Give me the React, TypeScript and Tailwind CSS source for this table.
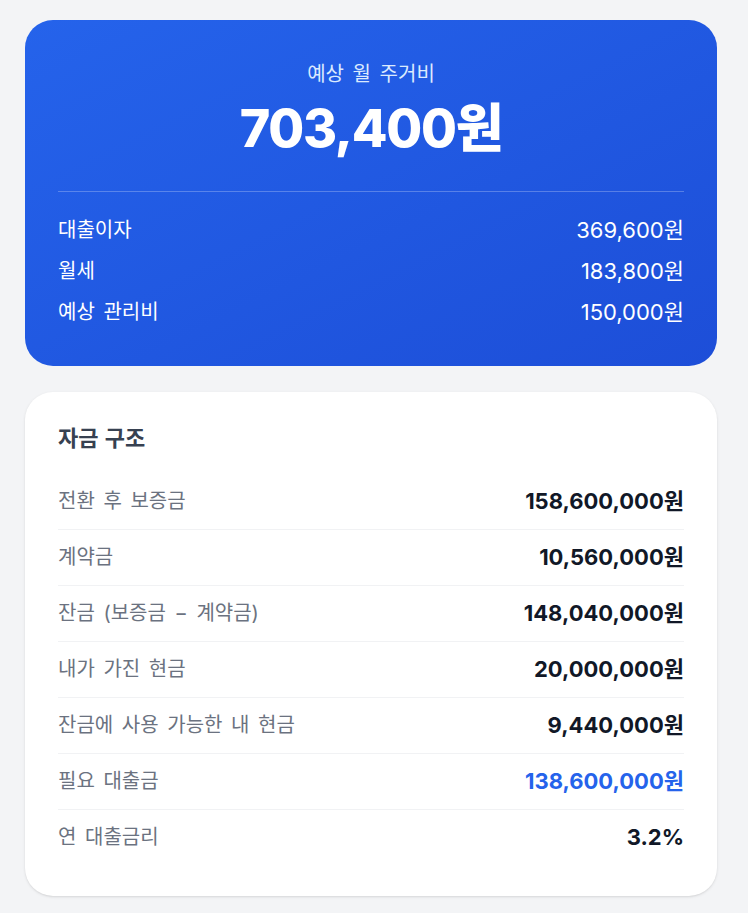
const rows: { label: string; value: string; accent?: boolean }[] = [
  { label: '전환 후 보증금', value: '158,600,000원' },
  { label: '계약금', value: '10,560,000원' },
  { label: '잔금 (보증금 − 계약금)', value: '148,040,000원' },
  { label: '내가 가진 현금', value: '20,000,000원' },
  { label: '잔금에 사용 가능한 내 현금', value: '9,440,000원' },
  { label: '필요 대출금', value: '138,600,000원', accent: true },
  { label: '연 대출금리', value: '3.2%' },
];

const costs = [
  { label: '대출이자', value: '369,600원' },
  { label: '월세', value: '183,800원' },
  { label: '예상 관리비', value: '150,000원' },
];

export default function App() {
  return (
    <div
      className="min-h-[913px] bg-[#f3f4f6] pl-[25px] pt-5 pb-4 [word-spacing:3px]"
      style={{ fontFamily: 'Inter, "Noto Sans CJK KR", sans-serif' }}
    >
      <div className="w-[692px] flex flex-col gap-[26px]">
        {/* Summary */}
        <div className="rounded-[28px] bg-gradient-to-br from-[#2563eb] to-[#1d4ed8] px-[33px] pt-[40px] pb-10 text-white">
          <div className="text-center">
            <p className="text-[20px] leading-7 text-[#dbeafe]">예상 월 주거비</p>
            <p className="mt-[15px] text-[52px] leading-[52px] font-extrabold tracking-tight">703,400원</p>
          </div>
          <div className="mt-[36px] border-t border-white/25" />
          <div className="mt-[24px] flex flex-col gap-[13px]">
            {costs.map((c) => (
              <div key={c.label} className="flex justify-between items-center leading-7">
                <span className="text-[20px]">{c.label}</span>
                <span className="text-[22px]">{c.value}</span>
              </div>
            ))}
          </div>
        </div>

        {/* Fund structure */}
        <div className="rounded-[28px] bg-white px-[33px] pt-8 pb-[31px] shadow-sm">
          <h2 className="text-[22px] leading-7 font-bold text-[#374151] [word-spacing:1px]">자금 구조</h2>
          <div className="mt-[22px]">
            {rows.map((r, i) => (
              <div
                key={r.label}
                className={`flex justify-between items-center py-[14px] leading-[27px] ${i < rows.length - 1 ? 'border-b border-[#f1f2f4]' : ''}`}
              >
                <span className="text-[20px] text-[#6b7280]">{r.label}</span>
                <span className={`text-[22px] font-bold ${r.accent ? 'text-[#2563eb]' : 'text-[#111827]'}`}>
                  {r.value}
                </span>
              </div>
            ))}
          </div>
        </div>
      </div>
    </div>
  );
}
